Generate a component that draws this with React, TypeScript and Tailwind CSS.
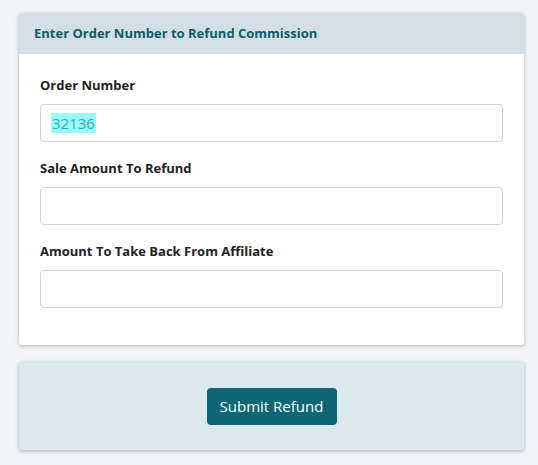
export default function App() {
  return (
    <div className="min-h-screen bg-[#f3f4f8] pl-[19px] pr-[14px] pt-[13px] pb-4 font-['Open_Sans',sans-serif]">
      <div className="overflow-hidden rounded-[3px] bg-white shadow-[0_1px_4px_rgba(0,0,0,0.25)]">
        <div className="flex h-[41px] items-center bg-[#d3dfe4] px-[15px] text-[13px] font-bold text-[#0d5c6b]">
          Enter Order Number to Refund Commission
        </div>
        <div className="px-[21px] pt-[22px] pb-[37px]">
          <div className="space-y-[17px]">
            <div>
              <label className="block text-[13px] font-bold leading-[18px] text-[#222]">
                Order Number
              </label>
              <div className="mt-[10px] flex h-[38px] items-center rounded-[4px] border border-[#cfd3da] px-[10px]">
                <span className="bg-[#99fcfc] px-[1px] text-[15px] leading-[20px] text-[#3fa7b3]">
                  32136
                </span>
              </div>
            </div>
            <div>
              <label className="block text-[13px] font-bold leading-[18px] text-[#222]">
                Sale Amount To Refund
              </label>
              <div className="mt-[10px] h-[38px] rounded-[4px] border border-[#cfd3da]" />
            </div>
            <div>
              <label className="block text-[13px] font-bold leading-[18px] text-[#222]">
                Amount To Take Back From Affiliate
              </label>
              <div className="mt-[10px] h-[38px] rounded-[4px] border border-[#cfd3da]" />
            </div>
          </div>
        </div>
      </div>
      <div className="mt-[17px] flex h-[88px] items-center justify-center rounded-[3px] bg-[#dde8ed] shadow-[0_1px_4px_rgba(0,0,0,0.3)]">
        <button className="h-[37px] w-[130px] rounded-[4px] bg-[#0f6674] text-[15px] text-white">
          Submit Refund
        </button>
      </div>
    </div>
  );
}
